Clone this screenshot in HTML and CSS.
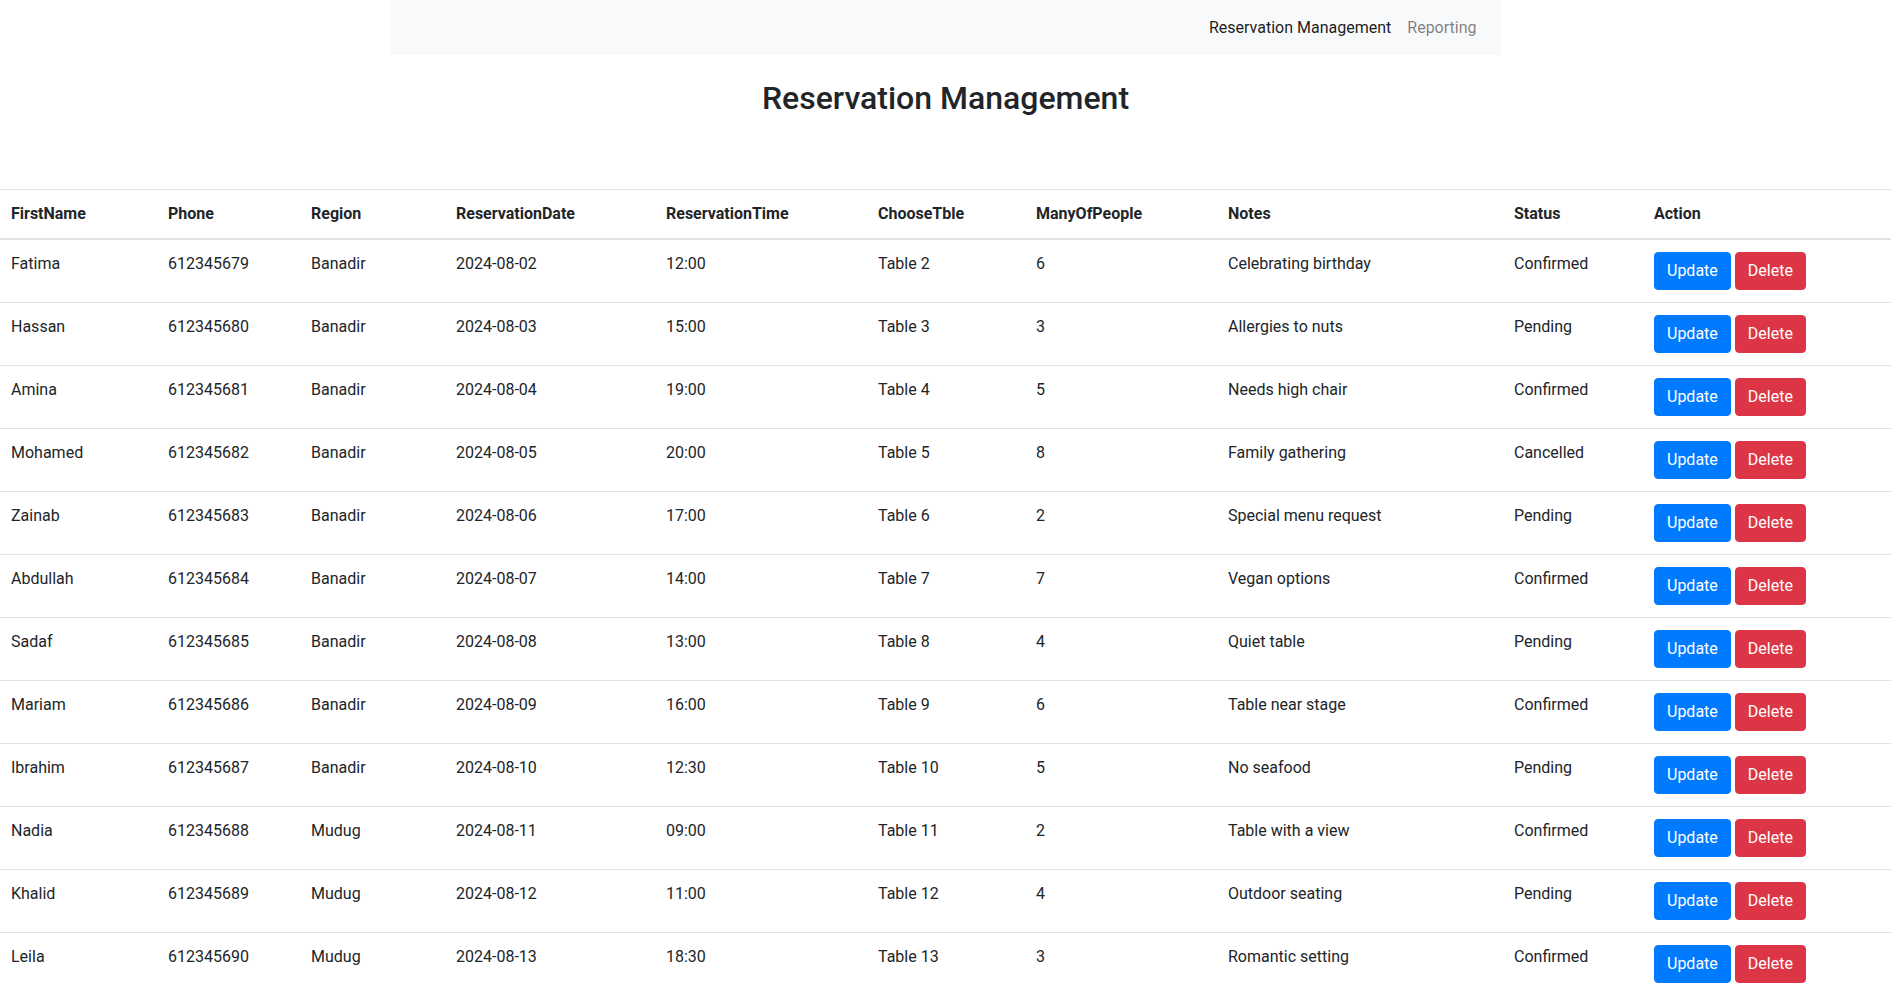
FILE: index.html
```html
<!DOCTYPE html>
<html lang="en">
<head>
<meta charset="utf-8">
<title>Reservation Management</title>
<link rel="stylesheet" href="styles.css">
</head>
<body>
<div class="container">
  <nav class="navbar">
    <ul class="nav-links">
      <li><a class="nav-link active" href="#">Reservation Management</a></li>
      <li><a class="nav-link" href="#">Reporting</a></li>
    </ul>
  </nav>
  <h2 class="title">Reservation Management</h2>
</div>
<table class="table">
  <colgroup>
    <col class="c1"><col class="c2"><col class="c3"><col class="c4"><col class="c5">
    <col class="c6"><col class="c7"><col class="c8"><col class="c9"><col class="c10">
  </colgroup>
  <thead>
    <tr>
      <th>FirstName</th><th>Phone</th><th>Region</th><th>ReservationDate</th><th>ReservationTime</th>
      <th>ChooseTble</th><th>ManyOfPeople</th><th>Notes</th><th>Status</th><th>Action</th>
    </tr>
  </thead>
  <tbody>
    <tr><td>Fatima</td><td>612345679</td><td>Banadir</td><td>2024-08-02</td><td>12:00</td><td>Table 2</td><td>6</td><td>Celebrating birthday</td><td>Confirmed</td><td><button class="btn btn-primary">Update</button> <button class="btn btn-danger">Delete</button></td></tr>
    <tr><td>Hassan</td><td>612345680</td><td>Banadir</td><td>2024-08-03</td><td>15:00</td><td>Table 3</td><td>3</td><td>Allergies to nuts</td><td>Pending</td><td><button class="btn btn-primary">Update</button> <button class="btn btn-danger">Delete</button></td></tr>
    <tr><td>Amina</td><td>612345681</td><td>Banadir</td><td>2024-08-04</td><td>19:00</td><td>Table 4</td><td>5</td><td>Needs high chair</td><td>Confirmed</td><td><button class="btn btn-primary">Update</button> <button class="btn btn-danger">Delete</button></td></tr>
    <tr><td>Mohamed</td><td>612345682</td><td>Banadir</td><td>2024-08-05</td><td>20:00</td><td>Table 5</td><td>8</td><td>Family gathering</td><td>Cancelled</td><td><button class="btn btn-primary">Update</button> <button class="btn btn-danger">Delete</button></td></tr>
    <tr><td>Zainab</td><td>612345683</td><td>Banadir</td><td>2024-08-06</td><td>17:00</td><td>Table 6</td><td>2</td><td>Special menu request</td><td>Pending</td><td><button class="btn btn-primary">Update</button> <button class="btn btn-danger">Delete</button></td></tr>
    <tr><td>Abdullah</td><td>612345684</td><td>Banadir</td><td>2024-08-07</td><td>14:00</td><td>Table 7</td><td>7</td><td>Vegan options</td><td>Confirmed</td><td><button class="btn btn-primary">Update</button> <button class="btn btn-danger">Delete</button></td></tr>
    <tr><td>Sadaf</td><td>612345685</td><td>Banadir</td><td>2024-08-08</td><td>13:00</td><td>Table 8</td><td>4</td><td>Quiet table</td><td>Pending</td><td><button class="btn btn-primary">Update</button> <button class="btn btn-danger">Delete</button></td></tr>
    <tr><td>Mariam</td><td>612345686</td><td>Banadir</td><td>2024-08-09</td><td>16:00</td><td>Table 9</td><td>6</td><td>Table near stage</td><td>Confirmed</td><td><button class="btn btn-primary">Update</button> <button class="btn btn-danger">Delete</button></td></tr>
    <tr><td>Ibrahim</td><td>612345687</td><td>Banadir</td><td>2024-08-10</td><td>12:30</td><td>Table 10</td><td>5</td><td>No seafood</td><td>Pending</td><td><button class="btn btn-primary">Update</button> <button class="btn btn-danger">Delete</button></td></tr>
    <tr><td>Nadia</td><td>612345688</td><td>Mudug</td><td>2024-08-11</td><td>09:00</td><td>Table 11</td><td>2</td><td>Table with a view</td><td>Confirmed</td><td><button class="btn btn-primary">Update</button> <button class="btn btn-danger">Delete</button></td></tr>
    <tr><td>Khalid</td><td>612345689</td><td>Mudug</td><td>2024-08-12</td><td>11:00</td><td>Table 12</td><td>4</td><td>Outdoor seating</td><td>Pending</td><td><button class="btn btn-primary">Update</button> <button class="btn btn-danger">Delete</button></td></tr>
    <tr><td>Leila</td><td>612345690</td><td>Mudug</td><td>2024-08-13</td><td>18:30</td><td>Table 13</td><td>3</td><td>Romantic setting</td><td>Confirmed</td><td><button class="btn btn-primary">Update</button> <button class="btn btn-danger">Delete</button></td></tr>
  </tbody>
</table>
</body>
</html>
```
FILE: styles.css
```css
* { box-sizing: border-box; }
body {
  margin: 0;
  font-family: Roboto, "Liberation Sans", sans-serif;
  font-size: 16px;
  line-height: 1.5;
  color: #212529;
  background: #fff;
}
.container {
  width: 1140px;
  margin: 0 auto;
  padding: 0 15px;
}
.navbar {
  background: #f8f9fa;
  height: 55px;
  display: flex;
  align-items: center;
  justify-content: flex-end;
  padding: 0 16px;
}
.nav-links {
  list-style: none;
  margin: 0;
  padding: 0;
  display: flex;
}
.nav-link {
  display: block;
  padding: 8px;
  text-decoration: none;
  color: rgba(0,0,0,.5);
}
.nav-link.active { color: rgba(0,0,0,.9); }
.title {
  margin: 24px 0 0;
  text-align: center;
  font-size: 32px;
  font-weight: 500;
  line-height: 1.2;
  height: 110px;
}
.table {
  width: 100%;
  border-collapse: collapse;
  table-layout: fixed;
  color: #212529;
}
.c1 { width: 156px; }
.c2 { width: 143px; }
.c3 { width: 145px; }
.c4 { width: 210px; }
.c5 { width: 212px; }
.c6 { width: 158px; }
.c7 { width: 192px; }
.c8 { width: 286px; }
.c9 { width: 140px; }
.c10 { width: 249px; }
.table th, .table td {
  padding: 12px;
  vertical-align: top;
  border-top: 1px solid #dee2e6;
  text-align: left;
}
.table thead th {
  font-weight: 700;
  border-bottom: 2px solid #dee2e6;
}
.table td:first-child, .table th:first-child { padding-left: 11px; }
.btn {
  display: inline-block;
  font-family: inherit;
  font-size: 16px;
  line-height: 1.5;
  padding: 6px 12px;
  border: 1px solid transparent;
  border-radius: 4px;
  color: #fff;
  cursor: pointer;
  vertical-align: middle;
}
.btn-primary { background: #007bff; border-color: #007bff; }
.btn-danger { background: #dc3545; border-color: #dc3545; }
```
